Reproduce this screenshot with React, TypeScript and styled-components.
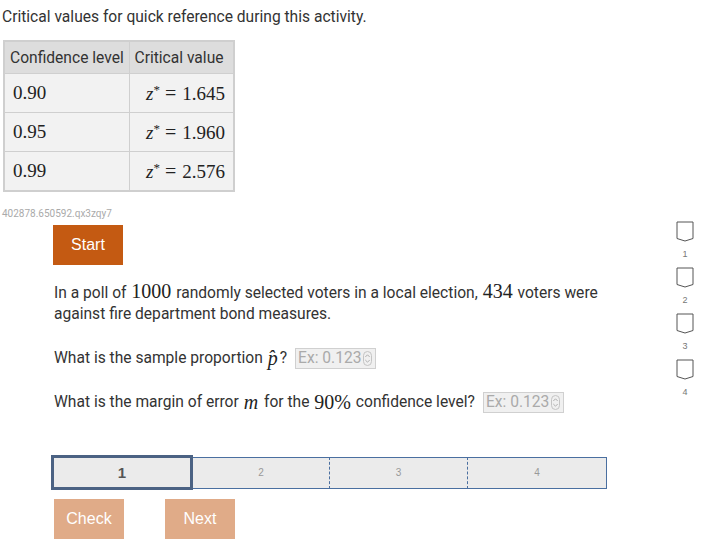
import React from 'react';
import styled, { createGlobalStyle } from 'styled-components';

const GlobalStyle = createGlobalStyle`
  body {
    margin: 0;
    background: #fff;
    font-family: Roboto, "Noto Sans", sans-serif;
    color: #333;
  }
`;

const rows = [
  { level: '0.90', value: '1.645' },
  { level: '0.95', value: '1.960' },
  { level: '0.99', value: '2.576' },
];

const segments = ['1', '2', '3', '4'];

function Spinner() {
  return (
    <svg width="9" height="15" viewBox="0 0 9 15">
      <rect x="0.5" y="0.5" width="8" height="14" rx="4" fill="none" stroke="#c4c4c4" />
      <path d="M2.3 6 L4.5 3.8 L6.7 6" fill="none" stroke="#a8a8a8" strokeWidth="0.9" />
      <path d="M2.3 9 L4.5 11.2 L6.7 9" fill="none" stroke="#a8a8a8" strokeWidth="0.9" />
    </svg>
  );
}

function LevelBox() {
  return (
    <svg width="18" height="21" viewBox="0 0 18 21">
      <path d="M1 1 H17 V17.5 L9 20 L1 17.5 Z" fill="#fff" stroke="#555" strokeWidth="1" />
    </svg>
  );
}

function App() {
  return (
    <>
      <GlobalStyle />
      <Page>
        <Intro>Critical values for quick reference during this activity.</Intro>
        <Table>
          <colgroup>
            <col style={{ width: 125 }} />
            <col style={{ width: 105 }} />
          </colgroup>
          <thead>
            <tr>
              <HeadCell>Confidence level</HeadCell>
              <HeadCell>Critical value</HeadCell>
            </tr>
          </thead>
          <tbody>
            {rows.map((r) => (
              <tr key={r.level}>
                <Cell>
                  <MathText>{r.level}</MathText>
                </Cell>
                <Cell $right>
                  <MathText>
                    <Var>z</Var>
                    <Sup>*</Sup>
                    <Equals>=</Equals>
                    {r.value}
                  </MathText>
                </Cell>
              </tr>
            ))}
          </tbody>
        </Table>

        <ActivityRow>
          <Main>
            <IdText>402878.650592.qx3zqy7</IdText>
            <Content>
              <ActionButton $strong>Start</ActionButton>
              <Paragraph>
                In a poll of <InlineMath>1000</InlineMath> randomly selected voters in a local election,{' '}
                <InlineMath>434</InlineMath> voters were against fire department bond measures.
              </Paragraph>
              <Question>
                What is the sample proportion <InlineMath $pad><Var>p̂</Var></InlineMath>?
                <AnswerBox>
                  <Placeholder>Ex: 0.123</Placeholder>
                  <Spinner />
                </AnswerBox>
              </Question>
              <Question>
                What is the margin of error <InlineMath $pad><Var>m</Var></InlineMath> for the{' '}
                <InlineMath>90%</InlineMath> confidence level?
                <AnswerBox>
                  <Placeholder>Ex: 0.123</Placeholder>
                  <Spinner />
                </AnswerBox>
              </Question>

              <Progress>
                {segments.map((s, i) => (
                  <Segment key={s} $active={i === 0} $dashed={i > 1}>
                    {s}
                  </Segment>
                ))}
              </Progress>

              <Buttons>
                <ActionButton>Check</ActionButton>
                <ActionButton>Next</ActionButton>
              </Buttons>
            </Content>
          </Main>

          <Sidebar>
            {segments.map((s) => (
              <LevelItem key={s}>
                <LevelBox />
                <LevelLabel>{s}</LevelLabel>
              </LevelItem>
            ))}
          </Sidebar>
        </ActivityRow>
      </Page>
    </>
  );
}

const Page = styled.div`
  padding: 7px 0 0 2px;
  width: 705px;
  box-sizing: border-box;
`;

const Intro = styled.p`
  margin: 0 0 13px 0;
  font-size: 15.6px;
  line-height: 20px;
  color: #333;
`;

const Table = styled.table`
  margin-left: 1px;
  border-collapse: collapse;
  table-layout: fixed;
  width: 230px;
  border: 2px solid #cfcfcf;
  font-size: 15.6px;
`;

const HeadCell = styled.th`
  background: #dddddd;
  border: 1px solid #cfcfcf;
  font-weight: 400;
  text-align: left;
  white-space: nowrap;
  padding: 0 4px 0 5px;
  height: 31px;
  color: #333;
`;

const Cell = styled.td<{ $right?: boolean }>`
  background: #f2f2f2;
  border: 1px solid #cfcfcf;
  padding: 0 8px;
  height: 38px;
  white-space: nowrap;
  text-align: ${(p) => (p.$right ? 'right' : 'left')};
`;

const MathText = styled.span`
  font-family: "Liberation Serif", "DejaVu Serif", serif;
  font-size: 19px;
  color: #222;
`;

const InlineMath = styled.span<{ $pad?: boolean }>`
  font-family: "Liberation Serif", "DejaVu Serif", serif;
  font-size: 20px;
  color: #222;
  padding: ${(p) => (p.$pad ? '0 2px 0 1px' : '0 1px')};
`;

const Var = styled.i`
  font-style: italic;
`;

const Sup = styled.sup`
  font-size: 13px;
  vertical-align: 6px;
  line-height: 0;
`;

const Equals = styled.span`
  margin: 0 6px 0 5px;
  font-size: 20px;
`;

const ActivityRow = styled.div`
  display: flex;
  margin-top: 16px;
`;

const Main = styled.div`
  flex: 1;
`;

const IdText = styled.div`
  font-size: 10px;
  color: #aaa;
  line-height: 12px;
`;

const Content = styled.div`
  padding: 5px 0 0 51px;
  width: 556px;
`;

const ActionButton = styled.button<{ $strong?: boolean }>`
  display: flex;
  align-items: center;
  justify-content: center;
  width: 70px;
  height: 40px;
  border: none;
  padding: 0;
  background: ${(p) => (p.$strong ? '#c45a12' : '#e0ab88')};
  color: #fff;
  font-family: "Liberation Sans", Arial, sans-serif;
  font-size: 16px;
`;

const Paragraph = styled.p`
  margin: 16px 0 0 1px;
  font-size: 15.6px;
  line-height: 21px;
  width: 560px;
`;

const Question = styled.div`
  display: flex;
  align-items: center;
  margin: 23px 0 0 1px;
  font-size: 15.6px;
  line-height: 21px;
  white-space: pre;
`;

const AnswerBox = styled.div`
  display: flex;
  align-items: center;
  gap: 1px;
  margin-left: 8px;
  width: 81px;
  height: 21px;
  box-sizing: border-box;
  padding: 0 3px 0 2px;
  background: #f0f0f0;
  border: 1px solid #d0d0d0;
`;

const Placeholder = styled.span`
  flex: 1;
  color: #aaa;
  font-size: 15.6px;
`;

const Progress = styled.div`
  display: grid;
  grid-template-columns: 142px 136px 138px 140px;
  margin: 42px 0 0 -2px;
  height: 35px;
  align-items: center;
`;

const Segment = styled.div<{ $active?: boolean; $dashed?: boolean }>`
  display: flex;
  align-items: center;
  justify-content: center;
  box-sizing: border-box;
  background: #ebebeb;
  height: ${(p) => (p.$active ? '35px' : '32px')};
  border: ${(p) => (p.$active ? '3px solid #4b6283' : '1px solid #4a6fa0')};
  border-left: ${(p) => (p.$active ? '3px solid #4b6283' : p.$dashed ? '1px dashed #4a6fa0' : 'none')};
  border-right-width: ${(p) => (p.$active ? '3px' : '0')};
  &:last-child {
    border-right: 1px solid #4a6fa0;
  }
  color: ${(p) => (p.$active ? '#555' : '#999')};
  font-size: ${(p) => (p.$active ? '15px' : '10px')};
  font-weight: ${(p) => (p.$active ? 700 : 400)};
  font-family: "Liberation Sans", Arial, sans-serif;
`;

const Buttons = styled.div`
  display: flex;
  gap: 41px;
  margin-top: 9px;
  padding-left: 1px;
`;

const Sidebar = styled.div`
  width: 32px;
  margin: 13px 4px 0 0;
  display: flex;
  flex-direction: column;
  align-items: center;
  gap: 7px;
`;

const LevelItem = styled.div`
  display: flex;
  flex-direction: column;
  align-items: center;
  gap: 6px;
`;

const LevelLabel = styled.span`
  font-size: 9px;
  color: #777;
  line-height: 12px;
  font-family: "Liberation Sans", Arial, sans-serif;
`;

export default App;
